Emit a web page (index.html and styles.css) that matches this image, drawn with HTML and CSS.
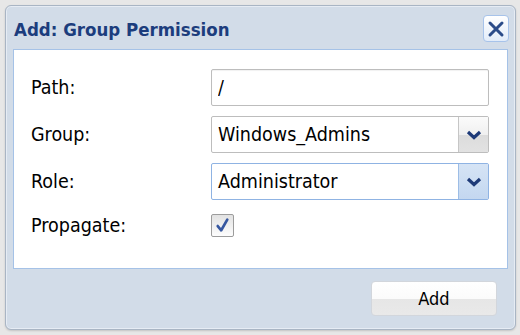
FILE: index.html
```html
<!DOCTYPE html>
<html lang="en">
<head>
  <meta charset="UTF-8">
  <title>Add: Group Permission</title>
  <link rel="stylesheet" href="styles.css">
</head>
<body>
  <div class="dialog">
    <div class="titlebar">
      <h1>Add: Group Permission</h1>
      <button class="close" title="Close">
        <svg width="18" height="18" viewBox="0 0 18 18"><path d="M3 3 L15 15 M15 3 L3 15" stroke="#2b4c89" stroke-width="3" stroke-linecap="round"/></svg>
      </button>
    </div>

    <div class="panel">
      <div class="form">
        <label>Path:</label>
        <input class="field" type="text" value="/">

        <label>Group:</label>
        <div class="combo">
          <span class="combo-value">Windows_Admins</span>
          <span class="combo-btn">
            <svg width="16" height="10" viewBox="0 0 16 10"><path d="M2 2 L8 7.5 L14 2" fill="none" stroke="#1d3a78" stroke-width="3.2"/></svg>
          </span>
        </div>

        <label>Role:</label>
        <div class="combo active">
          <span class="combo-value">Administrator</span>
          <span class="combo-btn">
            <svg width="16" height="10" viewBox="0 0 16 10"><path d="M2 2 L8 7.5 L14 2" fill="none" stroke="#1d3a78" stroke-width="3.2"/></svg>
          </span>
        </div>

        <label class="check-label">Propagate:</label>
        <div class="check-cell">
          <span class="checkbox">
            <svg width="17" height="17" viewBox="0 0 16 16"><path d="M3.5 8.5 L6.8 12.5 L12.5 2.5" fill="none" stroke="#3657a0" stroke-width="2.5" stroke-linecap="round" stroke-linejoin="round"/></svg>
          </span>
        </div>
      </div>
    </div>

    <div class="footer">
      <button class="btn">Add</button>
    </div>
  </div>
</body>
</html>
```

FILE: styles.css
```css
body {
  margin: 0;
  padding: 5px;
  background-color: #e7e7e7;
  font-family: "DejaVu Sans Condensed", "DejaVu Sans", sans-serif;
  font-stretch: condensed;
}

.dialog {
  width: 509px;
  height: 323px;
  border: 1px solid #a9b5c4;
  border-radius: 6px;
  background-color: #d2dce8;
  box-shadow: inset 0 0 0 1px #e6ecf4, 0 1px 2px rgba(0, 0, 0, 0.15);
  display: flex;
  flex-direction: column;
}

.titlebar {
  height: 43px;
  display: flex;
  align-items: center;
  justify-content: space-between;
  padding: 0 6px 0 8px;
}

.titlebar h1 {
  margin: 4px 0 0 0;
  font-size: 18.5px;
  font-weight: bold;
  color: #1c3d7d;
}

.close {
  width: 26px;
  height: 27px;
  margin-top: 2px;
  padding: 0;
  border: 1px solid #a7c3ea;
  border-radius: 4px;
  background: linear-gradient(#ffffff, #e2ecf9);
  display: flex;
  align-items: center;
  justify-content: center;
}

.panel {
  margin: 0 7px;
  height: 220px;
  background-color: #fff;
  border: 1px solid #a5c2e7;
  padding: 19px 18px 0 17px;
  box-sizing: border-box;
}

.form {
  display: grid;
  grid-template-columns: 180px 1fr;
  row-gap: 10px;
  align-items: center;
}

.form label {
  font-size: 19.5px;
  color: #000;
}

.field {
  height: 37px;
  box-sizing: border-box;
  border: 1px solid #bdbdbd;
  border-radius: 2px;
  padding: 0 6px;
  font-family: inherit;
  font-stretch: condensed;
  font-size: 19.5px;
  color: #000;
  box-shadow: inset 0 1px 1px rgba(0, 0, 0, 0.06);
}

.combo {
  height: 37px;
  box-sizing: border-box;
  border: 1px solid #bdbdbd;
  border-radius: 2px;
  display: flex;
  align-items: stretch;
}

.combo-value {
  flex: 1;
  display: flex;
  align-items: center;
  padding-left: 6px;
  font-size: 19.5px;
  color: #000;
}

.combo-btn {
  width: 29px;
  border-left: 1px solid #c6c6c6;
  background: linear-gradient(#fbfbfb, #f0f0f0 50%, #dcdcdc 51%, #e2e2e2);
  display: flex;
  align-items: center;
  justify-content: center;
}

.combo.active {
  border-color: #8fb3e3;
}

.combo.active .combo-btn {
  border-left-color: #9dbde6;
  background: linear-gradient(#d6e4f5, #c3d7f0);
}

.check-label {
  margin-top: 4px;
}

.check-cell {
  padding-top: 4px;
}

.checkbox {
  width: 21px;
  height: 21px;
  border: 1px solid #9c9c9c;
  border-radius: 2px;
  background: linear-gradient(#e2e2e2, #fdfdfd);
  display: flex;
  align-items: center;
  justify-content: center;
}

.footer {
  display: flex;
  justify-content: flex-end;
  padding: 12px 18px 0 0;
}

.btn {
  width: 126px;
  height: 35px;
  border: 1px solid #d2d6dc;
  border-radius: 4px;
  background: linear-gradient(#ffffff, #fbfbfb 50%, #e6e6e6 51%, #e9e9e9);
  font-family: inherit;
  font-stretch: condensed;
  font-size: 18px;
  color: #000;
}
```
